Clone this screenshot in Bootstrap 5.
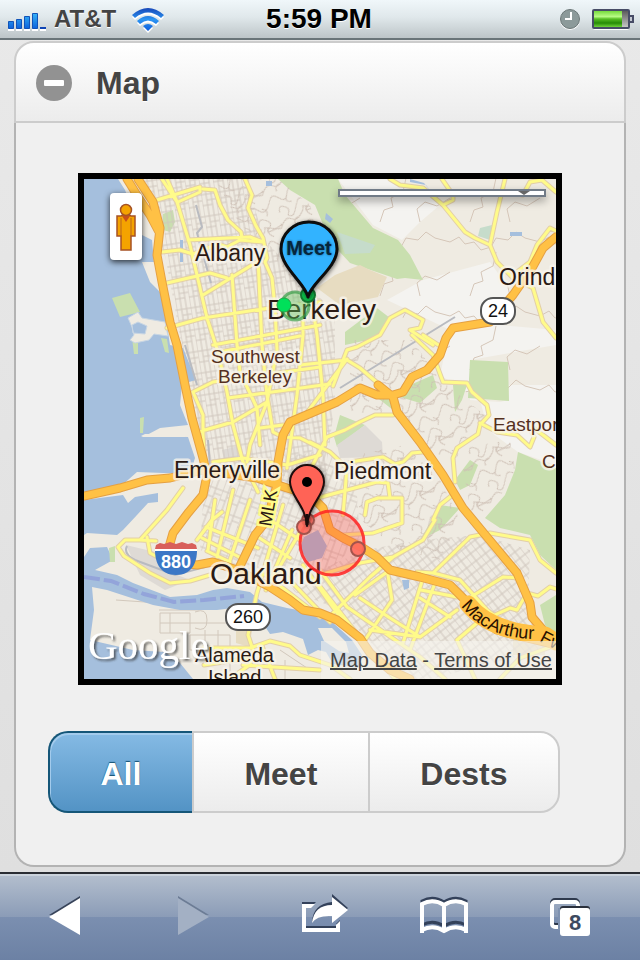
<!DOCTYPE html>
<html lang="en">
<head>
<meta charset="utf-8">
<meta name="viewport" content="width=device-width, initial-scale=1">
<title>Map</title>
<link href="https://cdn.jsdelivr.net/npm/bootstrap@5.3.0/dist/css/bootstrap.min.css" rel="stylesheet">
<style>
body{font-family:"Liberation Sans",Arial,sans-serif;background:linear-gradient(#e9e9e9,#dedede);color:#444}
.status{height:40px;background:linear-gradient(#f0f7fa,#e0e8eb 45%,#bdc5c8);border-bottom:2px solid #6a7579;padding:0 6px 0 8px;text-shadow:0 1px 0 #fff;font-weight:700;line-height:40px}
.status .side{flex:1 1 0}
.carrier{font-size:24px}
.clock-time{font-size:28px;color:#000;margin-right:4px}
.status svg{display:block}
.panel{margin:1px 14px 5px;border-radius:20px;border:0;background:none}
.panel-head{height:82px;width:100%;border:2px solid #ccc;border-radius:20px 20px 0 0;background:linear-gradient(#fff,#ececec);padding:2px 20px 0;gap:24px;font-size:32px;font-weight:700;color:#444;text-shadow:0 1px 0 #fff}
.panel-body{border:2px solid #b3b3b3;border-top:0;border-radius:0 0 20px 20px;background:#f0f0f0;padding:50px 32px 52px}
.map-frame{margin:0 30px 46px;border:6px solid #000;height:512px;overflow:hidden;background:#efebe2}
.map-frame>svg{display:block;width:100%;height:100%}
.pegman{left:26px;top:14px;width:32px;height:67px;padding:8px 6px;background:#fff;border:0;border-radius:4px;box-shadow:0 2px 6px rgba(0,0,0,.75)}
.pegman svg{display:block}
.type-bar{right:10px;top:10px;width:44%;height:8px;padding:0;background:#fff;border:2px solid #717b87;box-shadow:0 4px 8px rgba(0,0,0,.35)}
.type-bar i{display:block;width:0;margin:0 14px 0 auto;border:6px solid transparent;border-top:4px solid #666;border-bottom:0}
.legal{right:0;bottom:0;padding:4px 4px 4px 9px;font-size:20px;line-height:30px;background:rgba(245,243,238,.6);white-space:nowrap}
.legal a{color:#444}
.segments{max-width:512px;width:100%}
.segments .btn{height:82px;padding:4px 50px 0;font-size:32px;font-weight:700;color:#444;border:2px solid #ccc;border-right-width:0;background:linear-gradient(#fff,#ececec);text-shadow:0 1px 0 #fff;margin:0!important;border-radius:0}
.segments .btn:first-child{border-radius:20px 0 0 20px}
.segments .btn:last-child{border-right-width:2px;border-radius:0 20px 20px 0}
.segments .btn.active{color:#fff;border-color:#155678;background:linear-gradient(#85bae4,#5393c5);text-shadow:0 -1px 1px #145072;box-shadow:inset 1px 2px 0 #a3cbec}
.toolbar{height:88px;border-top:2px solid #2a2d33;box-shadow:inset 0 2px 0 #cbd3dc;background:linear-gradient(#b4bfce,#8b9cb7 50%,#7b8fb0 50%,#6c81a4);padding:0 40px 0 35px}
.toolbar button{width:60px;height:60px;padding:0;border:0;background:none}
.toolbar svg{display:block;overflow:visible}
svg text{font-family:"Liberation Sans",Arial,sans-serif}
.place{fill:#2b1a14;stroke:#f8f4ec;stroke-opacity:.8;stroke-width:5px;stroke-linejoin:round;paint-order:stroke}
.town{font-size:23px}.area{font-size:19px;fill:#55301f}.isle{font-size:20px}
.shield{font-size:18px;text-anchor:middle;fill:#111}
</style>
<script src="https://cdn.jsdelivr.net/npm/bootstrap@5.3.0/dist/js/bootstrap.bundle.min.js"></script>
</head>
<body class="d-flex flex-column min-vh-100">

<header class="status d-flex align-items-center">
  <div class="side d-flex align-items-center">
    <svg width="38" height="38" viewBox="8 0 38 38" role="img" aria-label="Signal strength">
      <defs><linearGradient id="sig" x2="0" y2="1"><stop stop-color="#35b3f7"/><stop offset="1" stop-color="#0c62dc"/></linearGradient></defs>
      <path fill="#fff" d="M8 29h6v2H8zM16 29h6v2h-6zM24 29h6v2h-6zM32 29h6v2h-6zM40 29h6v2h-6z"/>
      <g fill="url(#sig)" stroke="#1153b8"><path d="M8.500 21.500h5v7h-5zM16.500 19.500h5v9h-5zM24.500 16.500h5v12h-5zM32.500 13.500h5v15h-5z"/></g>
      <path fill="#0f45b5" d="M40 27h6v2h-6z"/>
    </svg>
    <span class="carrier ms-2">AT&amp;T</span>
    <svg class="ms-3" width="32" height="38" viewBox="130 0 32 38" role="img" aria-label="Wi-Fi">
      <defs><linearGradient id="wf" x2="0" y2="1"><stop stop-color="#1747b8"/><stop offset=".5" stop-color="#2c95f2"/><stop offset="1" stop-color="#0d5ddd"/></linearGradient></defs>
      <path fill="#fff" transform="translate(0 2)" d="M130 15q16-14 32 0l-3 3q-13-11-26 0zM135 21q11-10 22 0l-3 3q-8-7-16 0zM141 26q5-4 10 0l-5 5z"/>
      <path fill="url(#wf)" d="M130 15q16-14 32 0l-3 3q-13-11-26 0zM135 21q11-10 22 0l-3 3q-8-7-16 0zM141 26q5-4 10 0l-5 5z"/>
    </svg>
  </div>
  <div class="clock-time">5:59 PM</div>
  <div class="side d-flex justify-content-end">
    <svg width="76" height="38" viewBox="558 0 76 38" role="img" aria-label="Alarm, battery">
      <defs><linearGradient id="bat" x2="0" y2="1"><stop stop-color="#76da3c"/><stop offset=".35" stop-color="#b8fa85"/><stop offset=".5" stop-color="#56bd22"/><stop offset=".75" stop-color="#268a06"/><stop offset="1" stop-color="#6fd239"/></linearGradient>
      <linearGradient id="bat2" x2="0" y2="1"><stop stop-color="#555"/><stop offset="1" stop-color="#ccc"/></linearGradient></defs>
      <circle cx="570" cy="20" r="10" fill="#fff"/><circle cx="570" cy="19" r="9.500" fill="#8c9a9a" stroke="#6b7777"/>
      <path d="M571 12v7h-6" fill="none" stroke="#fff" stroke-width="2"/>
      <rect x="593" y="11" width="36" height="19" rx="2" fill="#fff"/>
      <rect x="593" y="10" width="36" height="18" rx="1" fill="url(#bat2)" stroke="#474c66" stroke-width="2"/>
      <path fill="url(#bat)" d="M594 11h28v16h-28z"/><path d="M630 16h3v6h-3" fill="#c4c9d2" stroke="#474c66" stroke-width="2"/>
    </svg>
  </div>
</header>

<main class="panel card flex-grow-1">
  <button class="panel-head d-flex align-items-center" type="button" aria-expanded="true">
    <svg width="36" height="36" viewBox="0 0 36 36" aria-hidden="true"><circle cx="18" cy="18" r="18" fill="#929292"/><rect x="8" y="15" width="20" height="6" rx="1" fill="#fff"/></svg>
    <span>Map</span>
  </button>
  <section class="panel-body flex-grow-1">
    <div class="map-frame position-relative">
      <svg viewBox="84 179 472 500" preserveAspectRatio="xMidYMid slice" role="img" aria-label="Map of Berkeley and Oakland">
        <defs>
          <pattern id="g1" width="14" height="22" patternUnits="userSpaceOnUse" patternTransform="rotate(-9)"><path d="M0 0V22M5 0V22M10 0V22M0 4H14M0 15H10M5 10H14" stroke="#cfc6bd" fill="none"/></pattern>
          <pattern id="g2" width="13" height="20" patternUnits="userSpaceOnUse" patternTransform="rotate(20)"><path d="M0 0V20M6 0V20M0 5H13M0 14H6M6 10H13" stroke="#cfc6bd" fill="none"/></pattern>
          <pattern id="g3" width="12" height="17" patternUnits="userSpaceOnUse" patternTransform="rotate(-38)"><path d="M0 0V17M6 0V17M0 4H12M0 12H12" stroke="#cfc6bd" fill="none"/></pattern>
          <pattern id="hill" width="44" height="38" patternUnits="userSpaceOnUse" patternTransform="rotate(-30)"><path d="M0 6q6-8 10 0t8 3q8-12 12-2t14-1M4 20q2-8 7-3t-1 9q3 6 9-1t8-8 6 4-3 8 8 3 6-8M0 32q8-6 11-1t10 1 6-6 8 5 9-1M18 9q-5 5 2 7M34 8q6 4 1 9M12 38q0-6 6-5M30 27q-4 5 1 11" stroke="#cdbfb4" fill="none"/></pattern>
          <pattern id="hill2" width="90" height="74" patternUnits="userSpaceOnUse"><path d="M0 20l9-5 6 7 9-2 7 8 10-3 5-9 12 2 8-8 9 6 15 4M20 74l4-12 9-3-2-9 12-6 3-14M60 74l-3-13 8-7 12 4 13-8" stroke="#d5c6b8" fill="none"/></pattern>
          <filter id="soft" x="-50%" y="-50%" width="200%" height="200%"><feGaussianBlur stdDeviation="1"/></filter>
          <filter id="pshadow" x="-40%" y="-40%" width="180%" height="180%"><feDropShadow dx="1" dy="1" stdDeviation="2" flood-opacity=".55"/></filter>
          <filter id="gshadow" x="-20%" y="-20%" width="140%" height="150%"><feDropShadow dx="2" dy="2" stdDeviation="1" flood-color="#333" flood-opacity=".7"/></filter>
          <g id="streets">
            <path d="M162 179L177 202 190 245 207 318 218 352 227 392 233 425 243 462 258 492M167 179L178 204M157 200L200 187 200 192 178 202M203 189L215 190 220 205 228 220 241 232 242 238M245 179L252 195 248 208 256 226 263 238 267 258 265 262 272 278 275 308 277 350 267 402 250 445 247 462M188 240L250 237 263 242M162 252L180 250 193 254 218 244 227 247 240 240 263 242M167 283L210 273 227 278M203 295L260 260M232 275L237 345 240 372 257 408 260 445M258 258L262 345 267 395 273 432 283 437 300 438 320 448M167 328L203 318 270 308 320 302M213 345L320 325M220 352L300 336M228 398L330 384M198 432L233 422 267 402M303 310L303 335 297 395 287 468M193 392L213 382 320 367M193 392L203 415 203 435 205 468M260 428L283 425M213 462L243 458 287 465 320 455"/>
            <path d="M310 290L317 335 323 395 325 445M300 365L347 360 360 368 380 385M333 386L347 350 357 347 380 335 390 318 405 310 423 320 420 328 410 330 433 345M347 359L303 418M393 415L375 415 360 422 345 430 327 437 305 480M310 442L330 452 347 468 343 515M350 462L383 457 395 464 403 462 412 453 423 452M310 500L377 482 388 483 390 498 402 498 402 523 373 533 343 535M365 515L367 502 378 498 390 498"/>
            <path d="M412 335L433 355 443 382 467 383 472 392 487 405 489 415 480 425 478 434 457 448 453 458 455 482M423 335L443 348M480 423L497 432 517 435 530 447 534 437 528 424 543 435 556 445M390 179L400 185 423 188 443 205 465 232 475 238 490 245 497 262 513 278 533 288 543 322 556 338M490 245L497 212 505 179M442 179L453 195 453 200 443 205M503 192L523 195 530 182 542 180 556 192M517 272L530 262 537 245 550 228 556 231M433 520L440 505 455 493"/>
            <path d="M183 488L167 510 140 540 125 540 118 547 124 556 150 573 170 583 190 581 210 575M147 537L150 553 175 566M140 540L156 541M215 500L208 550M233 490L217 557M250 500L230 560M197 540L212 520 222 512M206 527L258 548M202 538L245 560M207 551L230 562M283 505L257 593 248 635 253 650 250 665M303 527L270 583M292 530L266 590M263 515L300 540M255 535L290 558M266 575L320 617M280 570L330 622"/>
            <path d="M203 648L250 648 270 641 290 646 300 655 330 665 350 679M243 665L320 670M262 646L275 679M204 665L250 658M230 679L248 666M303 565L337 613 370 653 405 679M320 570L347 607 420 657 445 679M315 580L350 625 395 679M333 613L370 577 393 557 423 540 435 520M355 595L390 570M360 598L390 618 420 637 457 610M370 630L420 637M393 557L360 563 320 575M388 575L392 600 365 640M423 578L403 643M435 583L410 650M421 590L457 597M420 598L450 617M417 572L433 573 470 537 490 533 530 540 540 560 556 573M433 573L460 580 487 610 500 620M463 602L503 577 520 578M457 640L477 623 510 608 517 610 527 593 538 596 550 587 556 589M457 640L475 679M500 679L520 658 556 645"/>
          </g>
          <g id="highways">
            <path d="M127 179L140 200 150 215 159 232M138 179L153 202 160 228 157 255 162 282 170 322 177 345 185 385 192 418 203 458 207 475 203 495 188 513 173 533 169 547 180 563 197 565 213 562 237 570 270 587 290 600 303 610 320 613 337 620 360 638 370 653 390 670 410 679"/>
            <path d="M84 496L120 488 147 480 170 478 203 470 257 478 287 488 310 495 323 508 330 530 343 538 363 548 377 557 390 570 420 577 450 585 463 598 473 613 497 630 523 637 556 645"/>
            <path d="M556 237L543 248 532 268 513 295 490 322 453 328 446 338 440 355 427 370 412 377 403 392 393 395 377 395 360 388 337 402 290 422 283 435 278 462 277 485 267 520 255 535 240 566M378 385L393 397 397 412 420 442 443 475 463 508 487 537 517 573 530 603 532 617 543 630 556 643"/>
          </g>
        </defs>
        <path fill="#efebe2" d="M84 179h472v500H84z"/>
        <path fill="#f4f3f0" d="M338 179L390 179 425 190 440 205 420 222 402 240 373 225ZM423 280L490 262 510 290 500 325 556 330 556 345 470 360 470 400 500 402 509 400 509 385 556 385 556 465 518 452 488 430 480 400 440 375 450 330 387 300Z"/>
        <path fill="url(#hill2)" d="M345 179H556V400H470L440 340 340 280Z"/>
        <path fill="#c9dfaf" d="M278 179L338 179 345 195 373 228 398 240 410 255 423 280 405 278 397 279 350 263 338 250 322 222 315 205 290 190ZM345 332L377 308 390 318 377 338 345 345ZM470 360L508 362 509 401 468 398ZM453 385L467 385 462 400 455 412ZM410 385L433 375 437 388 420 403 400 397ZM370 392L393 397 393 410ZM340 415L365 425 337 447 334 437ZM518 452L556 468 556 570 540 555 530 535 500 528 485 518 505 495 515 470ZM556 595L540 605 545 625 556 640ZM455 480L470 460 478 465 470 485 460 490ZM163 214L173 210 175 222 170 232 163 230ZM440 505L460 508 440 530 420 540Z"/>
        <path fill="#c6dccb" d="M337 232L375 245 370 253 345 254ZM480 228L492 225 490 240 478 236Z"/>
        <path fill="#e7dcc1" d="M317 288L335 275 360 265 370 270 387 277 378 297 340 305ZM513 640L545 635 545 655 513 655ZM236 631L252 631 249 647 236 643Z"/>
        <path fill="#dedad5" d="M365 425L382 442 383 457 340 458 337 445ZM222 450L238 446 238 458 224 459ZM126 545L155 552 170 572 190 580 165 590 140 575Z"/>
        <path fill="url(#g1)" d="M142 179L245 179 265 240 310 290 335 310 335 400 325 480 205 468 190 390 166 260Z"/>
        <path fill="url(#hill)" d="M215 179L278 179 310 205 325 250 300 290 262 240 240 225ZM350 340L412 340 440 380 485 415 455 460 425 450 395 415 350 412ZM355 455L405 445 440 480 460 520 440 560 400 550 360 520ZM460 448L510 440 515 470 490 515 470 510Z"/>
        <path fill="url(#g2)" d="M205 470L325 450 355 465 360 540 320 580 245 570 200 550Z"/>
        <path fill="url(#g3)" d="M365 550L420 540 480 535 530 550 528 610 545 650 430 679 405 679 340 610 290 590 320 570Z"/>
        <path fill="none" stroke="#d2c8bc" d="M159 610h40M160 613h30v20h-30zM170 613v20M160 623h75M195 612q12-5 12 8t-12 8M190 635h40v15h-40zM205 630v20M218 630v20M280 650l30 20M230 655v24M285 660v19M116 600l58 4"/>
        <g fill="#a5bfdd">
          <path d="M84 179L118 179 125 190 135 215 142 235 152 240 154 262 142 262 150 282 160 292 165 312 170 345 183 348 196 380 182 384 180 405 188 425 160 428 145 436 188 437 195 458 190 474 137 472 120 487 84 495ZM84 500L123 495 128 503 135 497 158 493 158 502 148 503 137 515 123 530 117 535 87 533 84 535Z"/>
          <path d="M84 557L90 548 107 547 113 560 95 570 117 575 133 583 170 597 197 595 213 590 227 588 250 592 262 602 287 608 303 611 330 620 352 640 362 655 358 668 333 664 326 652 318 650 308 655 303 639 283 632 270 634 262 622 248 606 217 610 180 610 153 605 107 590 92 587 94 610 90 640 103 643 133 650 165 652 180 663 193 679 84 679Z"/>
          <path d="M304 537L318 530 327 546 322 558 308 562 300 548ZM402 580h7v8l-5 2ZM266 181h6v5h-6ZM510 232h12v4h-12ZM326 213l7 6-3 4-5-4ZM410 179l14 4 8 10-6-8-16-3ZM180 240h3v22h-3Z"/>
        </g>
        <path fill="none" stroke="#8e9bd8" stroke-width="4" stroke-dasharray="16 4" opacity=".75" d="M84 577L111 581 144 594 174 602 204 600 244 596"/>
        <path fill="#c9dfaf" d="M112 298L130 293 140 312 120 317ZM140 418l4-1-1 16-3 0ZM132 338h6v16h-4ZM161 338l6 1 2 14-4-1ZM109 548l6-2v16h-5Z"/>
        <path fill="#efebe2" stroke="#c8d6e4" d="M128 318l10-6 4 6 23 4 3 14-14-2-5 6-14 3-5-3 4-5-2-8ZM138 322l-6 3 1 8 12 1 2-8Z" fill-rule="evenodd"/>
        <path fill="#efebe2" d="M141 436l4-2 40 0v3h-42ZM318 628l14 0 14 14 3 11-10-2-15-10Z"/>
        <path fill="none" stroke="#b9bbc0" stroke-width="2" d="M340 388L455 317M185 345L197 385M196 205l6 22-5 6 14 50M208 440l2 26M127 546q-4 8 8 14l40 15 30-8"/>
        <g fill="none" stroke-linejoin="round" stroke-linecap="round">
          <use href="#streets" stroke="#e3cfa8" stroke-width="5"/>
          <use href="#streets" stroke="#fffb8a" stroke-width="3"/>
          <use href="#highways" stroke="#e5a042" stroke-width="9"/>
          <use href="#highways" stroke="#ffc145" stroke-width="7"/>
          <path stroke="#ffc145" stroke-width="17" d="M468 604Q490 632 545 635L556 642"/>
        </g>

        <g class="place">
          <text class="town" x="195" y="261">Albany</text>
          <text x="267" y="319" font-size="28">Berkeley</text>
          <text class="area" x="211" y="363">Southwest</text>
          <text class="area" x="218" y="383">Berkeley</text>
          <text class="town" x="174" y="478">Emeryville</text>
          <text class="town" x="334" y="479">Piedmont</text>
          <text class="town" x="499" y="285">Orind</text>
          <text class="area" x="493" y="431">Eastpor</text>
          <text class="area" x="542" y="468">C</text>
          <text x="210" y="584" font-size="30">Oakland</text>
          <text class="isle" x="195" y="662">Alameda</text>
          <text class="isle" x="208" y="684">Island</text>
        </g>
        <text font-size="18" fill="#2b1a14" stroke="#fffb8a" stroke-width="5" paint-order="stroke" transform="translate(271 527) rotate(-80)">MLK</text>
        <path id="fwy" fill="none" d="M461 606Q485 638 535 639L575 660"/>
        <text font-size="18" fill="#2b1200"><textPath href="#fwy">MacArthur Fwy</textPath></text>
        <g fill="#fff" stroke="#555" stroke-width="2"><rect x="481" y="298" width="34" height="26" rx="12"/><rect x="226" y="604" width="44" height="26" rx="12"/></g>
        <text class="shield" x="498" y="317">24</text><text class="shield" x="248" y="623">260</text>
        <path fill="#3b77c6" d="M155 550h42c0 14-6 25-21 25s-21-11-21-25z"/><path fill="#d85f5b" d="M156 545l4-2 4 1 6-2 6 2 6-2 6 2 4-1 4 2 1 4h-42z"/><path fill="#fff" d="M155 549h42v2h-42z"/>
        <text class="shield" x="176" y="568" style="fill:#fff" font-weight="700">880</text>
        <text x="88" y="659" font-size="41" fill="#fff" filter="url(#gshadow)" style="font-family:'Liberation Serif','Times New Roman',serif">Google</text>

        <circle cx="295" cy="306" r="14" fill="#5dc05a" fill-opacity=".4" stroke="#2f9a40" stroke-opacity=".65" stroke-width="3"/>
        <circle cx="284" cy="305" r="7" fill="#00e05a" stroke="#26a347"/>
        <circle cx="308" cy="295" r="7" fill="#0bbd49" stroke="#13772f" stroke-width="2"/>
        <path filter="url(#pshadow)" fill="#33b3ff" stroke="#0a0a0a" stroke-width="3" stroke-linejoin="round" d="M308 297C306 284 281 268 281 249A28 27 0 0 1 337 249C337 268 310 284 308 297Z"/>
        <text x="309" y="255" font-size="20" font-weight="700" text-anchor="middle" fill="#06263c" opacity=".7" filter="url(#soft)" aria-hidden="true">Meet</text>
        <text x="309" y="255" font-size="20" font-weight="700" text-anchor="middle" fill="#06263c">Meet</text>
        <circle cx="332" cy="543" r="32" fill="#ff3b3b" fill-opacity=".28" stroke="#f22" stroke-opacity=".85" stroke-width="3"/>
        <g fill="#ff6b5e" fill-opacity=".9" stroke="#a3544c" stroke-width="2"><circle cx="308" cy="520" r="6"/><circle cx="304" cy="527" r="7"/><circle cx="358" cy="549" r="7"/></g>
        <path filter="url(#pshadow)" fill="#ff6357" stroke="#1b0c0a" stroke-width="2" stroke-linejoin="round" d="M307 526C306 506 290 496 290 482A17 17 0 0 1 324 482C324 496 308 506 307 526Z"/>
        <path d="M307 514v11" stroke="#1b0c0a" stroke-width="3"/>
        <circle cx="307" cy="482" r="5" fill="#000"/>
      </svg>
      <button class="pegman position-absolute" type="button" aria-label="Street View">
        <svg width="20" height="48" viewBox="0 0 20 48" aria-hidden="true"><path fill="#f4a300" stroke="#a65224" stroke-width="1.500" d="M1 13h4l2-1h6l2 1h4v20h-4v14H5V33H1z"/><path d="M5 15v18M15 15v18" stroke="#b8651f"/><path fill="#c84f18" d="M6 13h8l-4 6z"/><circle cx="10" cy="7" r="5.500" fill="#f4a300" stroke="#a65224" stroke-width="1.500"/></svg>
      </button>
      <button class="type-bar position-absolute" type="button" aria-label="Map type"><i></i></button>
      <div class="legal position-absolute"><a href="#data">Map Data</a> - <a href="#terms">Terms of Use</a></div>
    </div>
    <div class="segments btn-group" role="group" aria-label="Markers shown">
      <button type="button" class="btn active" aria-pressed="true">All</button>
      <button type="button" class="btn">Meet</button>
      <button type="button" class="btn">Dests</button>
    </div>
  </section>
</main>

<nav class="toolbar d-flex justify-content-between align-items-center" aria-label="Browser">
  <button type="button" aria-label="Back"><svg width="60" height="60"><path fill="#38445a" d="M14 28L45 9v18z"/><path fill="#fff" d="M14 30L45 11v37z"/></svg></button>
  <button type="button" aria-label="Forward" disabled><svg width="60" height="60"><path fill="#6c7c95" d="M17 9L48 28 17 27z"/><path fill="#a3b0c4" d="M17 11L48 30 17 48z"/></svg></button>
  <button type="button" aria-label="Share"><svg width="60" height="60">
    <path fill="#33415a" d="M14 15h14l-3 3H14zM18 39h30v3H18zM48 37l4-4v4z"/>
    <path fill="#fff" d="M14 17h13l-4 4h-5v20h30v-3l4-4v11H14z"/>
    <path fill="#33415a" d="M44 7l16 14-16 14v-7q-15-1-20 7 1-18 20-20z"/>
    <path fill="#fff" d="M44 10l16 13-16 13v-7q-15-1-20 7 2-18 20-18z"/></svg></button>
  <button type="button" aria-label="Bookmarks"><svg width="60" height="60">
    <path fill="none" stroke="#33415a" stroke-width="3" d="M8 18V16q11-6 22 1 11-7 22-1v2M8 40q11-6 22 1 11-7 22-1" transform="translate(0 -2)"/>
    <path fill="none" stroke="#fff" stroke-width="4" d="M8 46V17q11-6 22 1 11-7 22-1v29M8 43q11-6 22 1 11-7 22-1M30 17v28"/></svg></button>
  <button type="button" aria-label="Pages"><svg width="60" height="60">
    <rect x="12" y="13" width="26" height="25" rx="3" fill="none" stroke="#2f3a4d" stroke-width="4"/><rect x="12" y="15" width="26" height="25" rx="3" fill="none" stroke="#fff" stroke-width="4"/>
    <path d="M19 21v22" stroke="#7f92b0" stroke-width="2"/><rect x="20" y="19" width="30" height="28" rx="3" fill="#2a303c"/><rect x="20" y="21" width="30" height="28" rx="3" fill="#fff"/>
    <text x="35" y="43" font-size="22" font-weight="700" text-anchor="middle" fill="#3d4a5f">8</text></svg></button>
</nav>
</body>
</html>
